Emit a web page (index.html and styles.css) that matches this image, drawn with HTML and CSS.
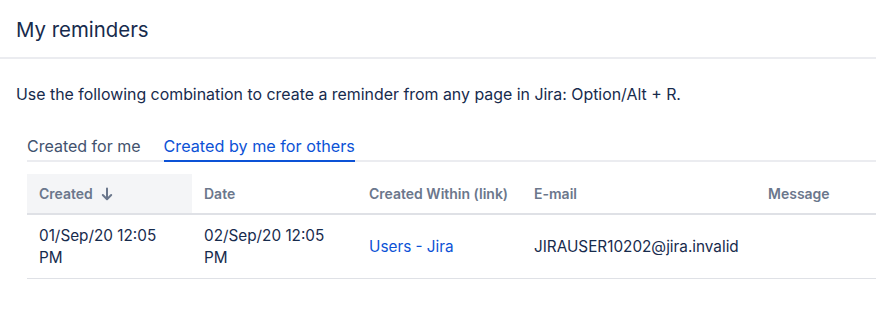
FILE: index.html
```html
<!DOCTYPE html>
<html lang="en">
<head>
<meta charset="utf-8">
<title>My reminders</title>
<link rel="stylesheet" href="styles.css">
</head>
<body>
<header class="page-header">
  <h1 class="title">My reminders</h1>
</header>
<main class="content">
  <p class="intro">Use the following combination to create a reminder from any page in Jira: Option/Alt + R.</p>
  <div class="panel">
    <nav class="tabs">
      <span class="tab">Created for me</span>
      <span class="tab tab-active">Created by me for others</span>
    </nav>
    <table class="reminders">
      <colgroup>
        <col class="c-created"><col class="c-date"><col class="c-within"><col class="c-email"><col class="c-message">
      </colgroup>
      <thead>
        <tr>
          <th class="sorted">Created <svg class="sort-icon" width="12" height="14" viewBox="0 0 12 14" aria-hidden="true"><path d="M6 1.5v10.5M1.8 8l4.2 4.2L10.2 8" fill="none" stroke="currentColor" stroke-width="2" stroke-linecap="round" stroke-linejoin="round"/></svg></th>
          <th>Date</th>
          <th>Created Within (link)</th>
          <th>E-mail</th>
          <th>Message</th>
        </tr>
      </thead>
      <tbody>
        <tr>
          <td>01/Sep/20 12:05 PM</td>
          <td>02/Sep/20 12:05 PM</td>
          <td><a class="link" href="#">Users - Jira</a></td>
          <td>JIRAUSER10202@jira.invalid</td>
          <td></td>
        </tr>
      </tbody>
    </table>
  </div>
</main>
</body>
</html>
```

FILE: styles.css
```css
* { box-sizing: border-box; }
html, body { margin: 0; padding: 0; background: #fff; }
body {
  font-family: Inter, "Noto Sans", "Liberation Sans", sans-serif;
  color: #172b4d;
  font-size: 14px;
  overflow: hidden;
}
.page-header {
  padding: 18px 16px 15px;
  border-bottom: 2px solid #ebecf0;
}
.title {
  margin: 0;
  font-size: 20.4px;
  line-height: 24px;
  font-weight: 400;
  color: #172b4d;
}
.content {
  padding: 0 0 0 16px;
}
.intro {
  margin: 26px 0 0;
  font-size: 15.9px;
  line-height: 20px;
}
.panel {
  margin: 31px 0 0 11px;
}
.tabs {
  display: flex;
  gap: 23px;
  border-bottom: 2px solid #ebecf0;
}
.tab {
  font-size: 16px;
  line-height: 20px;
  padding-bottom: 4px;
  margin-bottom: -2px;
  border-bottom: 2px solid transparent;
  color: #42526e;
}
.tab-active {
  color: #0c52d6;
  border-bottom-color: #0c52d6;
  font-size: 16.2px;
}
.reminders {
  margin-top: 12px;
  width: 849px;
  border-collapse: collapse;
  table-layout: fixed;
}
.c-created, .c-date, .c-within { width: 165px; }
.c-email { width: 234px; }
.c-message { width: 120px; }
.reminders th {
  height: 40px;
  padding: 0 12px;
  text-align: left;
  font-size: 14px;
  font-weight: 600;
  color: #6b778c;
  border-bottom: 2px solid #dfe1e6;
  white-space: nowrap;
}
.reminders th.sorted { background: #f4f5f7; }
.sort-icon { vertical-align: -2px; margin-left: 5px; }
.reminders td {
  padding: 10px 12px 9px;
  line-height: 22px;
  font-size: 15.3px;
  vertical-align: middle;
  border-bottom: 1px solid #dfe1e6;
}
.link {
  color: #0c52d6;
  text-decoration: none;
}
```
